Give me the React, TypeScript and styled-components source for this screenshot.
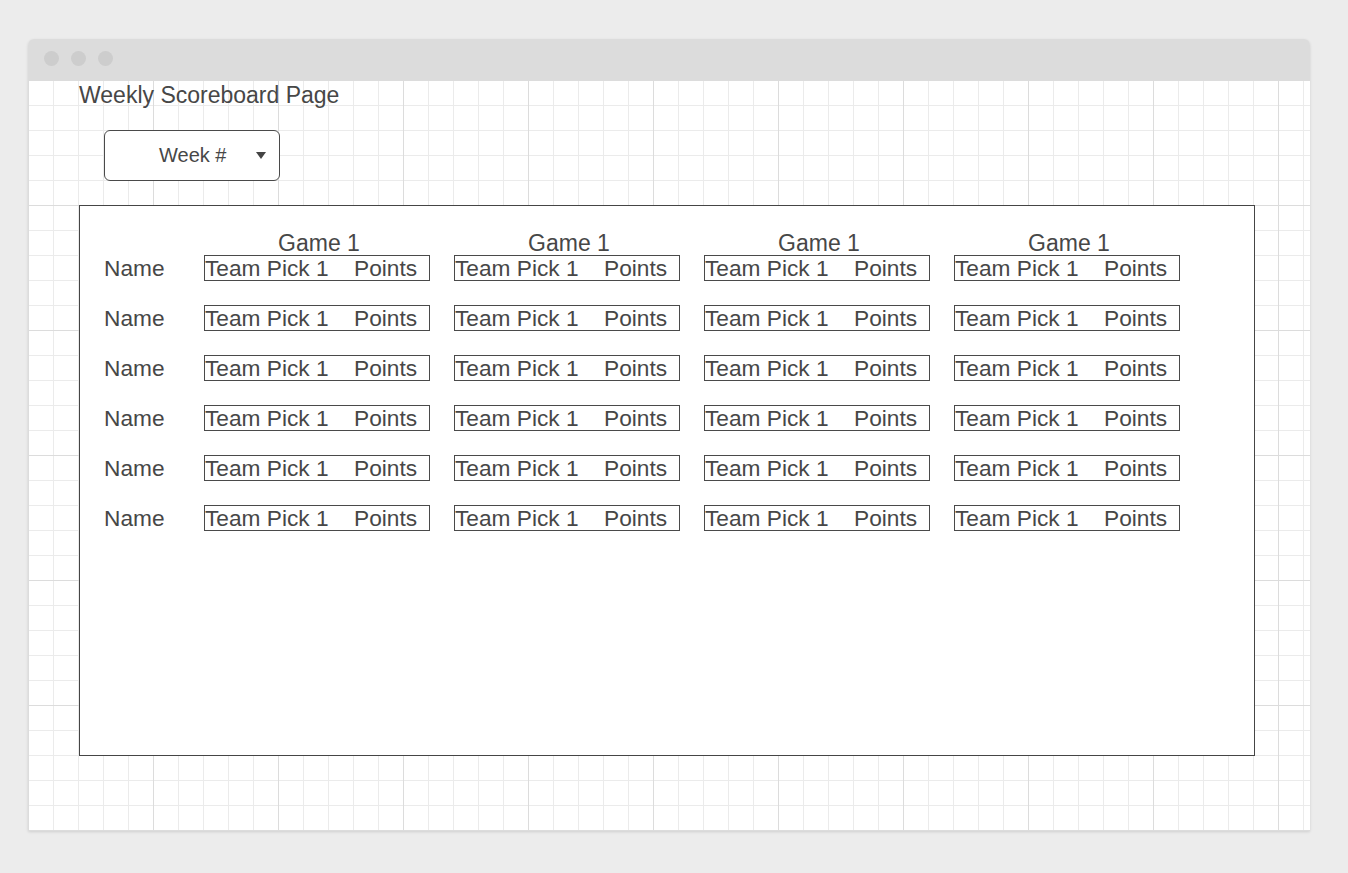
import React from "react";
import styled, { createGlobalStyle } from "styled-components";

const GlobalStyle = createGlobalStyle`
  body {
    margin: 0;
    background: #ececec;
    font-family: "Liberation Sans", Arial, sans-serif;
    color: #454545;
  }
`;

const Page = styled.div`
  width: 1348px;
  height: 873px;
  padding: 39px 0 0 28px;
  box-sizing: border-box;
`;

const Window = styled.div`
  width: 1282px;
  height: 792px;
  display: flex;
  flex-direction: column;
  border-radius: 6px 6px 0 0;
  overflow: hidden;
  box-shadow: 0px 1px 3px rgba(0, 0, 0, 0.12);
`;

const TitleBar = styled.div`
  height: 41px;
  flex-shrink: 0;
  background: #dcdcdc;

  display: flex;
  align-items: center;
  gap: 12px;
  padding: 0 0 3px 16px;
  box-sizing: border-box;
`;

const Dot = styled.span`
  width: 15px;
  height: 15px;
  border-radius: 50%;
  background: #cdcdcd;
`;

const Canvas = styled.div`
  flex: 1;
  background-color: #ffffff;
  background-image: linear-gradient(to right, #dcdcdc 1px, transparent 1px),
    linear-gradient(to bottom, #dcdcdc 1px, transparent 1px),
    linear-gradient(to right, #ebebeb 1px, transparent 1px),
    linear-gradient(to bottom, #ebebeb 1px, transparent 1px);
  background-size: 125px 125px, 125px 125px, 25px 25px, 25px 25px;
  background-position: 0 0;

  padding: 2px 0 0 51px;
  box-sizing: border-box;
`;

const PageTitle = styled.div`
  font-size: 23px;
  line-height: 26px;
  color: #474747;
`;

const WeekSelect = styled.div`
  width: 176px;
  height: 51px;
  margin: 22px 0 0 25px;
  box-sizing: border-box;

  display: flex;
  align-items: center;
  padding-left: 54px;

  border: 1px solid #4a4a4a;
  border-radius: 6px;
  background: #ffffff;

  font-size: 20px;
  color: #474747;
`;

const Caret = styled.span`
  width: 0;
  height: 0;
  margin-left: 30px;
  border-left: 5px solid transparent;
  border-right: 5px solid transparent;
  border-top: 7px solid #444444;
`;

const Board = styled.div`
  width: 1176px;
  height: 551px;
  margin-top: 24px;
  box-sizing: border-box;

  border: 1px solid #454545;
  background: #ffffff;

  padding: 25px 0 0 24px;

  display: flex;
  flex-direction: column;
`;

const Row = styled.div`
  display: flex;
  align-items: flex-start;
  margin-bottom: 24px;
`;

const HeaderRow = styled.div`
  display: flex;
  padding-left: 100px;
`;

const GameLabel = styled.div`
  width: 226px;
  height: 24px;
  margin-right: 24px;
  padding-left: 4px;
  box-sizing: border-box;
  text-align: center;
  font-size: 23px;
  line-height: 24px;
  color: #474747;
`;

const PlayerName = styled.div`
  width: 100px;
  height: 26px;
  font-size: 22.7px;
  line-height: 26px;
  color: #474747;
`;

const PickCell = styled.div`
  width: 226px;
  height: 26px;
  margin-right: 24px;
  box-sizing: border-box;

  border: 1px solid #4a4a4a;
  padding: 1px 0 0 0;

  display: flex;
  font-size: 22.7px;
  line-height: 23px;
  color: #474747;
  white-space: nowrap;
`;

const Pick = styled.span`
  width: 149px;
`;

const Points = styled.span``;

const games = ["Game 1", "Game 1", "Game 1", "Game 1"];
const players = ["Name", "Name", "Name", "Name", "Name", "Name"];

const App = () => {
  return (
    <>
      <GlobalStyle />
      <Page>
        <Window>
          <TitleBar>
            <Dot />
            <Dot />
            <Dot />
          </TitleBar>
          <Canvas>
            <PageTitle>Weekly Scoreboard Page</PageTitle>
            <WeekSelect>
              Week #
              <Caret />
            </WeekSelect>
            <Board>
              <HeaderRow>
                {games.map((game, i) => (
                  <GameLabel key={i}>{game}</GameLabel>
                ))}
              </HeaderRow>
              {players.map((name, r) => (
                <Row key={r}>
                  <PlayerName>{name}</PlayerName>
                  {games.map((_, c) => (
                    <PickCell key={c}>
                      <Pick>Team Pick 1</Pick>
                      <Points>Points</Points>
                    </PickCell>
                  ))}
                </Row>
              ))}
            </Board>
          </Canvas>
        </Window>
      </Page>
    </>
  );
};

export default App;
